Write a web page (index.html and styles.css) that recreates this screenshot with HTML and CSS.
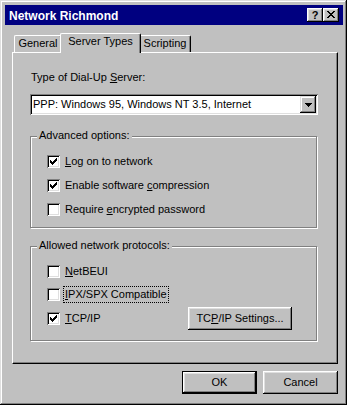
FILE: index.html
```html
<!DOCTYPE html>
<html>
<head>
<meta charset="utf-8">
<link rel="stylesheet" href="styles.css">
</head>
<body>
<div class="window">
  <div class="titlebar">
    <span class="title">Network Richmond</span>
    <div class="cbtns">
      <div class="cbtn help">?</div>
      <div class="cbtn close">
        <svg width="8" height="7" viewBox="0 0 8 7" shape-rendering="crispEdges"><path d="M0 0h2v1h-2z M6 0h2v1h-2z M1 1h2v1h-2z M5 1h2v1h-2z M2 2h4v1h-4z M3 3h2v1h-2z M2 4h4v1h-4z M1 5h2v1h-2z M5 5h2v1h-2z M0 6h2v1h-2z M6 6h2v1h-2z" fill="#000"/></svg>
      </div>
    </div>
  </div>
  <div class="body">
    <div class="tabs">
      <div class="tab t-general">General</div>
      <div class="tab t-server active">Server Types</div>
      <div class="tab t-script">Scripting</div>
    </div>
    <div class="panel">
      <div class="label">Type of Dial-Up <u>S</u>erver:</div>
      <div class="combo">
        <span class="combo-text">PPP: Windows 95, Windows NT 3.5, Internet</span>
        <span class="combo-btn"><svg width="7" height="4" viewBox="0 0 7 4" shape-rendering="crispEdges"><path d="M0 0h7v1h-7z M1 1h5v1h-5z M2 2h3v1h-3z M3 3h1v1h-1z" fill="#000"/></svg></span>
      </div>
      <div class="group g1">
        <div class="legend">Advanced options:</div>
        <div class="rows">
          <div class="row"><span class="check on"><svg width="7" height="7" viewBox="0 0 7 7" shape-rendering="crispEdges"><path d="M6 0h1v1h-1z M5 1h2v1h-2z M0 2h1v1h-1z M4 2h3v1h-3z M0 3h2v1h-2z M3 3h3v1h-3z M0 4h5v1h-5z M1 5h3v1h-3z M2 6h1v1h-1z" fill="#000"/></svg></span><span class="clabel"><u>L</u>og on to network</span></div>
          <div class="row"><span class="check on"><svg width="7" height="7" viewBox="0 0 7 7" shape-rendering="crispEdges"><path d="M6 0h1v1h-1z M5 1h2v1h-2z M0 2h1v1h-1z M4 2h3v1h-3z M0 3h2v1h-2z M3 3h3v1h-3z M0 4h5v1h-5z M1 5h3v1h-3z M2 6h1v1h-1z" fill="#000"/></svg></span><span class="clabel">Enable software <u>c</u>ompression</span></div>
          <div class="row"><span class="check"></span><span class="clabel">Require <u>e</u>ncrypted password</span></div>
        </div>
      </div>
      <div class="group g2">
        <div class="legend">Allowed network protocols:</div>
        <div class="rows">
          <div class="row"><span class="check"></span><span class="clabel"><u>N</u>etBEUI</span></div>
          <div class="row"><span class="check"></span><span class="clabel focus"><u>I</u>PX/SPX Compatible</span></div>
          <div class="row last"><span class="check on"><svg width="7" height="7" viewBox="0 0 7 7" shape-rendering="crispEdges"><path d="M6 0h1v1h-1z M5 1h2v1h-2z M0 2h1v1h-1z M4 2h3v1h-3z M0 3h2v1h-2z M3 3h3v1h-3z M0 4h5v1h-5z M1 5h3v1h-3z M2 6h1v1h-1z" fill="#000"/></svg></span><span class="clabel"><u>T</u>CP/IP</span><span class="btn settings">TC<u>P</u>/IP Settings...</span></div>
        </div>
      </div>
    </div>
    <div class="footer">
      <span class="btn default">OK</span>
      <span class="btn">Cancel</span>
    </div>
  </div>
</div>
</body>
</html>
```
FILE: styles.css
```css
html, body {
  margin: 0;
  padding: 0;
  background: #fff;
}
body {
  font-family: "Liberation Sans", Arial, sans-serif;
  font-size: 11px;
  line-height: 13px;
  color: #000;
}
u {
  text-decoration: underline;
  text-underline-offset: 1px;
}
.window {
  width: 347px;
  height: 405px;
  box-sizing: border-box;
  background: #c0c0c0;
  padding: 3px;
  box-shadow: inset -1px -1px #000, inset 1px 1px #dfdfdf, inset -2px -2px #808080, inset 2px 2px #fff;
  display: flex;
  flex-direction: column;
}
.titlebar {
  height: 20px;
  margin: 2px 1px 0 2px;
  background: #000080;
  display: flex;
  align-items: center;
  padding: 0 4px 0 4px;
}
.title {
  flex: 1;
  color: #fff;
  font-weight: bold;
  font-size: 12px;
  line-height: 14px;
  padding-top: 1px;
}
.cbtns {
  display: flex;
}
.cbtn {
  width: 16px;
  height: 14px;
  box-sizing: border-box;
  background: #c0c0c0;
  box-shadow: inset -1px -1px #000, inset 1px 1px #fff, inset -2px -2px #808080, inset 2px 2px #dfdfdf;
  display: flex;
  align-items: center;
  justify-content: center;
}
.cbtn.help {
  font-weight: bold;
  font-size: 11px;
  line-height: 12px;
  padding-bottom: 1px;
}
.cbtn.close svg {
  margin-top: -1px;
}
.body {
  flex: 1;
  padding: 8px 6px 0 9px;
  display: flex;
  flex-direction: column;
}
.tabs {
  display: flex;
  height: 19px;
  padding-left: 2px;
}
.tab {
  margin-top: 2px;
  height: 17px;
  box-sizing: border-box;
  border-top: 1px solid #fff;
  border-left: 1px solid #fff;
  border-right: 1px solid #000;
  border-top-left-radius: 2px;
  border-top-right-radius: 2px;
  box-shadow: inset -1px 0 #808080;
  padding-top: 1px;
  text-align: center;
  background: #c0c0c0;
}
.t-general {
  width: 48px;
}
.t-server {
  width: 77px;
}
.t-script {
  width: 52px;
}
.tab.active {
  margin: 0 -2px;
  width: 81px;
  height: 20px;
  position: relative;
  z-index: 1;
}
.panel {
  height: 312px;
  box-sizing: border-box;
  border: 1px solid;
  border-color: #fff #000 #000 #fff;
  box-shadow: inset -1px -1px #808080;
  padding: 18px 0 0 18px;
}
.label {
  height: 13px;
}
.combo {
  margin-top: 10px;
  margin-left: -1px;
  width: 288px;
  height: 21px;
  box-sizing: border-box;
  background: #fff;
  box-shadow: inset 1px 1px #808080, inset -1px -1px #fff, inset 2px 2px #000, inset -2px -2px #dfdfdf;
  padding: 2px;
  display: flex;
  align-items: center;
}
.combo-text {
  flex: 1;
  padding-left: 1px;
  line-height: 17px;
}
.combo-btn {
  width: 16px;
  height: 17px;
  box-sizing: border-box;
  background: #c0c0c0;
  box-shadow: inset -1px -1px #000, inset 1px 1px #dfdfdf, inset -2px -2px #808080, inset 2px 2px #fff;
  display: flex;
  align-items: center;
  justify-content: center;
}
.group {
  width: 287px;
  margin-left: -1px;
  box-sizing: border-box;
  border: 1px solid #808080;
  box-shadow: inset 1px 1px #fff, 1px 1px #fff;
}
.g1 {
  margin-top: 21px;
  height: 92px;
}
.g2 {
  margin-top: 18px;
  height: 95px;
}
.legend {
  width: fit-content;
  margin: -8px 0 0 6px;
  padding: 0 2px;
  height: 13px;
  background: #c0c0c0;
}
.rows {
  margin-top: 7px;
  display: flex;
  flex-direction: column;
}
.g2 .rows {
  margin-top: 8px;
}
.row {
  height: 24px;
  display: flex;
  align-items: center;
  padding-left: 16px;
}
.g2 .row {
  height: 23px;
}
.g2 .row.last {
  margin-top: 1px;
}
.check {
  width: 13px;
  height: 13px;
  box-sizing: border-box;
  background: #fff;
  box-shadow: inset 1px 1px #808080, inset -1px -1px #fff, inset 2px 2px #000, inset -2px -2px #dfdfdf;
  padding: 3px;
  flex: none;
}
.check svg {
  display: block;
}
.clabel {
  margin-left: 5px;
}
.clabel.focus {
  margin-left: 3px;
  padding: 1px 1px;
  border: 1px dotted #000;
}
.btn {
  width: 75px;
  height: 23px;
  box-sizing: border-box;
  background: #c0c0c0;
  box-shadow: inset -1px -1px #000, inset 1px 1px #fff, inset -2px -2px #808080, inset 2px 2px #dfdfdf;
  display: flex;
  align-items: center;
  justify-content: center;
}
.btn.settings {
  width: 104px;
  margin-left: auto;
  margin-right: 24px;
}
.btn.default {
  border: 1px solid #000;
}
.footer {
  margin-top: 7px;
  display: flex;
  justify-content: flex-end;
  gap: 6px;
}
```
